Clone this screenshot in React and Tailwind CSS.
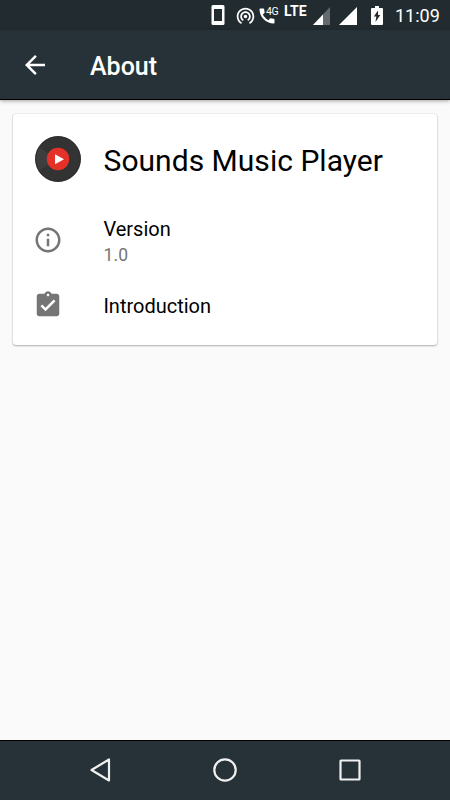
import React from "react";
import {
  MdArrowBack,
  MdAssignmentTurnedIn,
  MdCall,
  MdInfoOutline,
  MdWifiTethering,
} from "react-icons/md";

const App = () => (
  <div className="flex h-[800px] w-[450px] flex-col overflow-hidden bg-[#fafafa] font-[Roboto,sans-serif]">
    <StatusBar />
    <Toolbar title="About" />

    <main className="flex-1 px-[13px] pt-[14px]">
      <section className="h-[231px] rounded-[3px] bg-white pt-[21px] pl-[22px] shadow-[0_1px_2px_rgba(0,0,0,0.28),0_0_2px_rgba(0,0,0,0.14)]">
        <div className="flex h-[48px] items-start">
          <DiscLogo />
          <h2 className="ml-[22.6px] pt-[2px] text-[30px] leading-[47px] tracking-[0.02px] text-black">
            Sounds Music Player
          </h2>
        </div>

        <Row icon={MdInfoOutline} title="Version" subtitle="1.0" className="mt-[32px] h-[50px]" />
        <Row icon={MdAssignmentTurnedIn} title="Introduction" className="mt-[25px] h-[30px]" />
      </section>
    </main>

    <NavBar />
  </div>
);

/* ---------- BARS ---------- */

const StatusBar = () => (
  <header className="flex h-[30px] shrink-0 items-center bg-[#222c30] pl-[211px] text-white">
    <svg className="h-[22px] w-[14px]" viewBox="0 0 14 22">
      <path
        fill="currentColor"
        fillRule="evenodd"
        d="M2 1h10a1.500 1.500 0 0 1 1.500 1.500v17a1.500 1.500 0 0 1-1.500 1.500H2a1.500 1.500 0 0 1-1.500-1.500v-17A1.500 1.500 0 0 1 2 1zm1 4v12h8V5z"
      />
    </svg>
    <MdWifiTethering className="mt-px ml-[9.5px] h-[21px] w-[21px]" />
    <div className="ml-[1.5px] flex h-[30px] w-[22px]">
      <MdCall className="mt-[6px] h-[20px] w-[20px] shrink-0" />
      <span className="-ml-[11px] pt-[6px] text-[10.5px] leading-[12px] tracking-[-0.3px]">4G</span>
    </div>
    <span className="mb-[7px] ml-[5px] w-[24px] text-[14px] leading-[15px] font-bold">LTE</span>
    <svg className="mt-[2px] ml-[5px] h-[18px] w-[17px]" viewBox="0 0 17 18">
      <path fill="#fff" fillOpacity="0.3" d="M17 0v18H0z" />
      <path fill="#fff" d="M10 7.400v10.600H0z" />
    </svg>
    <svg className="mt-[2px] ml-[9px] h-[18px] w-[18px]" viewBox="0 0 18 18">
      <path fill="#fff" d="M18 0v18H0z" />
    </svg>
    <svg className="ml-[13.5px] h-[19px] w-[12px]" viewBox="0 0 12 19">
      <path
        fill="currentColor"
        fillRule="evenodd"
        d="M4 0h4v2h3a1 1 0 0 1 1 1v15a1 1 0 0 1-1 1H1a1 1 0 0 1-1-1V3a1 1 0 0 1 1-1h3zM7 4.500l-4.200 6h2.500l-.8 5.500 4.800-7H7z"
      />
    </svg>
    <span className="ml-[12.5px] pt-[2px] text-[18px] leading-[28px]">11:09</span>
  </header>
);

const Toolbar = ({ title }) => (
  <div className="z-10 flex h-[70px] shrink-0 items-center border-b border-black bg-[#263238] pl-[20px] text-white shadow-[0_1px_4px_rgba(0,0,0,0.35)]">
    <MdArrowBack className="h-[30px] w-[30px]" />
    <h1 className="ml-[40px] pt-[5px] text-[25px] leading-[30px] font-medium">{title}</h1>
  </div>
);

const NavBar = () => (
  <nav className="flex h-[60px] shrink-0 items-start justify-center gap-[95px] border-t border-black bg-[#263238] pt-[14px] text-[#f0f0f0]">
    <NavIcon>
      <path d="M24 4.500v21L6.500 15z" />
    </NavIcon>
    <NavIcon>
      <circle cx="15" cy="15" r="10.700" />
    </NavIcon>
    <NavIcon>
      <rect x="5.500" y="5.500" width="19" height="19" rx="0.500" />
    </NavIcon>
  </nav>
);

/* ---------- UI PRIMITIVES ---------- */

const NavIcon = ({ children }) => (
  <svg
    className="h-[30px] w-[30px]"
    viewBox="0 0 30 30"
    fill="none"
    stroke="currentColor"
    strokeWidth="2.200"
    strokeLinejoin="round"
  >
    {children}
  </svg>
);

const DiscLogo = () => (
  <svg className="mt-px h-[46px] w-[46px]" viewBox="0 0 46 46">
    <circle cx="23" cy="23" r="22.700" fill="#333" />
    <path fill="#3d3d3d" d="M23 23 4 11.500A22 22 0 0 0 4 34.500z" />
    <circle cx="23" cy="23" r="22.500" fill="none" stroke="#222" strokeWidth="0.800" />
    <circle cx="23" cy="23" r="11.200" fill="#e53228" />
    <path fill="#fff" d="M20 18.200v10l9-5z" />
  </svg>
);

const Row = ({ icon: Icon, title, subtitle, className }) => (
  <div className={`flex items-center ${className}`}>
    <Icon className="-ml-[2px] h-[30px] w-[30px] text-[#757575]" />
    <div className="ml-[40.4px] pt-[2px]">
      <p className="text-[20px] leading-[26px] text-black">{title}</p>
      {subtitle && (
        <p className="-mb-px pt-px text-[17.5px] leading-[24px] tracking-[0.2px] text-[#757575]">
          {subtitle}
        </p>
      )}
    </div>
  </div>
);

export default App;
